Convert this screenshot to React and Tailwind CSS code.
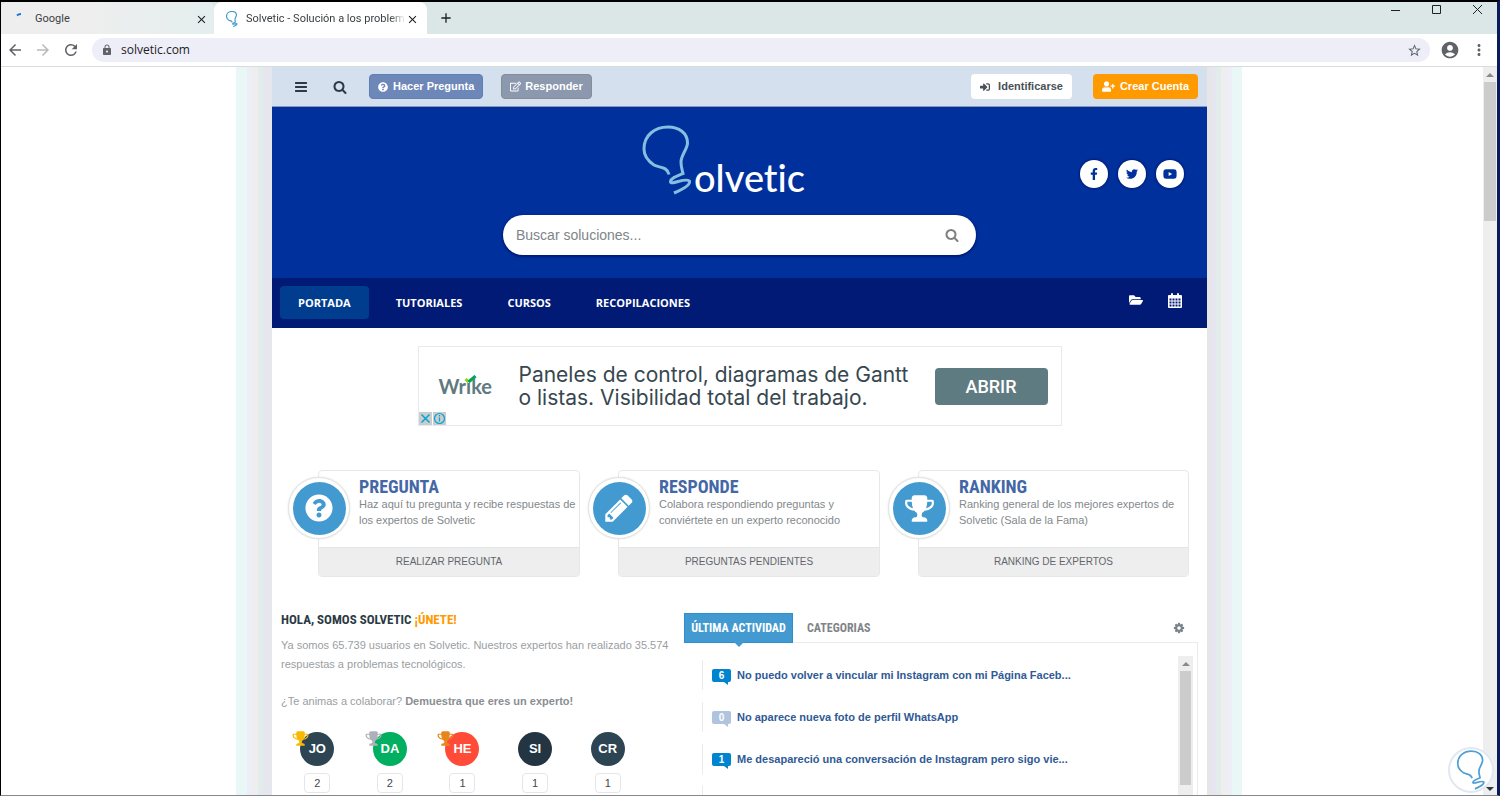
import React, { useState } from "react";
import {
  FaQuestionCircle,
  FaRegEdit,
  FaSignInAlt,
  FaUserPlus,
  FaFacebookF,
  FaTwitter,
  FaYoutube,
  FaFolderOpen,
} from "react-icons/fa";
import {
  MdArrowBack,
  MdArrowForward,
  MdRefresh,
  MdLock,
  MdStarBorder,
  MdAccountCircle,
  MdMoreVert,
  MdClose,
  MdAdd,
} from "react-icons/md";

const paths = {
  bars: "M1664 1344v128q0 26-19 45t-45 19h-1408q-26 0-45-19t-19-45v-128q0-26 19-45t45-19h1408q26 0 45 19t19 45zm0-512v128q0 26-19 45t-45 19h-1408q-26 0-45-19t-19-45v-128q0-26 19-45t45-19h1408q26 0 45 19t19 45zm0-512v128q0 26-19 45t-45 19h-1408q-26 0-45-19t-19-45v-128q0-26 19-45t45-19h1408q26 0 45 19t19 45z",
  search:
    "M1216 832q0-185-131.5-316.5t-316.5-131.5-316.5 131.5-131.5 316.5 131.5 316.5 316.5 131.5 316.5-131.5 131.5-316.5zm512 832q0 52-38 90t-90 38q-54 0-90-38l-343-342q-179 124-399 124-143 0-273.5-55.5t-225-150-150-225-55.5-273.5 55.5-273.5 150-225 225-150 273.5-55.5 273.5 55.5 225 150 150 225 55.5 273.5q0 220-124 399l343 343q37 37 37 90z",
  pencil:
    "M491 1536l91-91-235-235-91 91v107h128v128h107zm523-928q0-22-22-22-10 0-17 7l-542 542q-7 7-7 17 0 22 22 22 10 0 17-7l542-542q7-7 7-17zm-54-192l416 416-832 832h-416v-416zm683 96q0 53-37 90l-166 166-416-416 166-165q36-38 90-38 53 0 91 38l235 234q37 39 37 91z",
  trophy:
    "M522 883q-74-162-74-371h-256v96q0 78 94.5 162t235.5 113zm1078-275v-96h-256q0 209-74 371 141-29 235.5-113t94.5-162zm128-128v128q0 71-41.5 143t-112 130-173 97.5-215.5 44.5q-42 54-95 95-38 34-52.5 72.5t-14.5 89.5q0 54 30.5 91t97.5 37q75 0 133.5 45.5t58.5 114.5v64q0 14-9 23t-23 9h-832q-14 0-23-9t-9-23v-64q0-69 58.5-114.5t133.5-45.5q67 0 97.5-37t30.5-91q0-51-14.5-89.5t-52.5-72.5q-53-41-95-95-113-5-215.5-44.5t-173-97.5-112-130-41.5-143v-128q0-40 28-68t68-28h288v-96q0-66 47-113t113-47h576q66 0 113 47t47 113v96h288q40 0 68 28t28 68z",
  cog: "M1152 896q0-106-75-181t-181-75-181 75-75 181 75 181 181 75 181-75 75-181zm512-109v222q0 12-8 23t-20 13l-185 28q-19 54-39 91 35 50 107 138 10 12 10 25t-9 23q-27 37-99 108t-94 71q-12 0-26-9l-138-108q-44 23-91 38-16 136-29 186-7 28-36 28h-222q-14 0-24.5-8.5t-11.5-21.5l-28-184q-49-16-90-37l-141 107q-10 9-25 9-14 0-25-11-126-114-165-168-7-10-7-23 0-12 8-23 15-21 51-66.5t54-70.5q-27-50-41-99l-183-27q-13-2-21-12.5t-8-23.5v-222q0-12 8-23t19-13l186-28q14-46 39-92-40-57-107-138-10-12-10-24 0-10 9-23 26-36 98.5-107.5t94.5-71.5q13 0 26 10l138 107q44-23 91-38 16-136 29-186 7-28 36-28h222q14 0 24.5 8.5t11.5 21.5l28 184q49 16 90 37l142-107q9-9 24-9 13 0 25 10 129 119 165 170 7 8 7 22 0 12-8 23-15 21-51 66.5t-54 70.5q26 50 41 98l183 28q13 2 21 12.5t8 23.5z",
};

const Icon = ({ name, className }) => (
  <svg viewBox="0 0 1792 1792" fill="currentColor" className={className} aria-hidden="true">
    <path d={paths[name]} />
  </svg>
);

const Bulb = ({ className, width = 3 }) => (
  <svg viewBox="0 0 52 70" fill="none" stroke="currentColor" strokeWidth={width} className={className} aria-hidden="true">
    <path d="M27 49.500C25 41 17 43 12 40C6 36 2 31 2 24C2 10 13 2 26 2C37 2 45.500 8 45.500 18C45.500 24 39 30 39 37C39 42 40 44 41 48.500C35 51 29 53 28.500 56.500C29 61 43 52 47.500 56C49 60 39 65 32 68" />
  </svg>
);

const CalendarIcon = () => (
  <svg viewBox="0 0 14 15" className="w-[14px] h-[15px]" aria-hidden="true">
    <path fill="currentColor" d="M1 2h2V1q0-1 1-1t1 1v1h4V1q0-1 1-1t1 1v1h2q1 0 1 1v11q0 1-1 1H1q-1 0-1-1V3q0-1 1-1z" />
    <path stroke="#001a76" strokeWidth="2" strokeDasharray="2 1" d="M1.500 6.500h11M1.500 9.500h11M1.500 12.500h11" />
  </svg>
);

const stripes = {
  left: ["w-[11px] bg-[#eaf7f7]", "w-[5px] bg-[#eeeef8]", "w-[6px] bg-[#eeeeee]", "w-[5px] bg-[#e2ecea]", "w-[9px] bg-[#e6e6ee]"],
  right: ["w-[4px] bg-[#e6e6e6]", "w-[5px] bg-[#e6e6f0]", "w-[5px] bg-[#e2ecea]", "w-[6px] bg-[#eeeeee]", "w-[5px] bg-[#eeeef8]", "w-[10px] bg-[#eaf7f7]"],
};

const Stripes = ({ items }) => (
  <div className="flex shrink-0" aria-hidden="true">
    {items.map((item, index) => (
      <div key={index} className={item}></div>
    ))}
  </div>
);

const navLinks = ["PORTADA", "TUTORIALES", "CURSOS", "RECOPILACIONES"];

const cards = [
  {
    title: "PREGUNTA",
    lines: ["Haz aquí tu pregunta y recibe respuestas de", "los expertos de Solvetic"],
    action: "REALIZAR PREGUNTA",
    icon: <FaQuestionCircle className="size-[28px]" />,
  },
  {
    title: "RESPONDE",
    lines: ["Colabora respondiendo preguntas y", "conviértete en un experto reconocido"],
    action: "PREGUNTAS PENDIENTES",
    icon: <Icon name="pencil" className="size-[32px]" />,
  },
  {
    title: "RANKING",
    lines: ["Ranking general de los mejores expertos de", "Solvetic (Sala de la Fama)"],
    action: "RANKING DE EXPERTOS",
    icon: <Icon name="trophy" className="size-[31px]" />,
  },
];

const experts = [
  { name: "JO", count: 2, color: "bg-[#2d4553]", trophy: "text-[#f9b801]" },
  { name: "DA", count: 2, color: "bg-[#00b060]", trophy: "text-[#b0b0b8]" },
  { name: "HE", count: 1, color: "bg-[#ff4b38]", trophy: "text-[#e8861c]" },
  { name: "SI", count: 1, color: "bg-[#233443]" },
  { name: "CR", count: 1, color: "bg-[#2d4553]" },
];

const activity = [
  { count: 6, title: "No puedo volver a vincular mi Instagram con mi Página Faceb..." },
  { count: 0, title: "No aparece nueva foto de perfil WhatsApp" },
  { count: 1, title: "Me desapareció una conversación de Instagram pero sigo vie..." },
  { count: null, title: "" },
];

const BrowserBar = () => {
  const [url, setUrl] = useState("solvetic.com");

  return (
    <div className="shrink-0 text-[#3c4043]">
      {/* tabs */}
      <div className="flex h-[32px] bg-[#dae7e6] font-[Roboto,sans-serif] text-[11px]">
        <div className="flex items-center w-[213px] pl-[14px] pr-[6px] pt-[2px] bg-linear-to-r from-[#eeeeee] from-40% to-[#e4eeee] rounded-t-md">
          <svg viewBox="0 0 12 12" className="size-[12px]" aria-hidden="true">
            <path d="M2 2.500Q3.500 1 6 1" stroke="#1976d2" strokeWidth="2" fill="none" />
          </svg>
          <span className="ml-[8px] flex-1">Google</span>
          <button aria-label="Cerrar pestaña Google"><MdClose className="size-[13px] text-[#202124]" /></button>
        </div>
        <div className="flex items-center w-[213px] pl-[12px] pr-[8px] pt-[2px] bg-white rounded-t-lg">
          <Bulb className="w-[12px] h-[16px] text-[#439ad0]" width={5} />
          <span className="ml-[8px] flex-1 whitespace-nowrap mask-r-from-90%">Solvetic - Solución a los problem</span>
          <button aria-label="Cerrar pestaña Solvetic"><MdClose className="size-[13px] text-[#202124]" /></button>
        </div>
        <button className="px-[11px]" aria-label="Nueva pestaña"><MdAdd className="size-[16px] text-[#202124]" /></button>
        <div className="flex items-start ml-auto gap-[30px] pt-[2px] pr-[14px] text-[#202124]">
          <button aria-label="Minimizar">
            <svg viewBox="0 0 11 11" className="size-[11px]" fill="none" stroke="currentColor"><path d="M1 6.500h9" /></svg>
          </button>
          <button aria-label="Maximizar">
            <svg viewBox="0 0 11 11" className="size-[11px]" fill="none" stroke="currentColor"><path d="M1.500 1.500h8v8h-8z" /></svg>
          </button>
          <button aria-label="Cerrar">
            <svg viewBox="0 0 11 11" className="size-[11px]" fill="none" stroke="currentColor"><path d="M1 1l9 9M10 1l-9 9" /></svg>
          </button>
        </div>
      </div>

      {/* address */}
      <div className="flex items-center h-[33px] bg-white border-b border-[#d5dedd] pl-[5px] pr-[9px] text-[#5f6368]">
        <button aria-label="Atrás" className="mr-[10px]"><MdArrowBack className="size-[18px]" /></button>
        <button aria-label="Adelante" className="mr-[10px] text-[#b8babd]"><MdArrowForward className="size-[18px]" /></button>
        <button aria-label="Recargar" className="mr-[12px]"><MdRefresh className="size-[18px]" /></button>
        <div className="flex items-center flex-1 h-[24px] rounded-full bg-[#eeeef8] pl-[9px] pr-[8px]">
          <MdLock className="size-[12px]" />
          <input
            type="text"
            aria-label="Dirección"
            className="flex-1 ml-[8px] bg-transparent font-['Open_Sans',sans-serif] text-[12px] text-[#202124] focus:outline-none"
            value={url}
            onChange={(e) => setUrl(e.target.value)}
          />
          <button aria-label="Añadir a marcadores"><MdStarBorder className="size-[15px]" /></button>
        </div>
        <button aria-label="Perfil" className="ml-[10px]"><MdAccountCircle className="size-[20px]" /></button>
        <button aria-label="Menú" className="ml-[10px]"><MdMoreVert className="size-[18px]" /></button>
      </div>
    </div>
  );
};

const TopBar = () => (
  <div className="flex items-center h-[40px] bg-[#d5e0ef] border-b border-[#8b98b5] pl-[22px] pr-[9px] text-[11px] font-bold">
    <button aria-label="Menú principal" className="text-[#2b3a44]"><Icon name="bars" className="size-[14px]" /></button>
    <button aria-label="Buscar" className="ml-[25px] text-[#2b3a44]"><Icon name="search" className="size-[14px]" /></button>
    <button className="flex items-center h-[25px] ml-[22px] px-[8px] rounded-sm border border-[#5f7fb8] bg-[#6d87b9] text-white">
      <FaQuestionCircle className="size-[10px] mr-[5px]" />Hacer Pregunta
    </button>
    <button className="flex items-center h-[25px] ml-[18px] px-[8px] rounded-sm border border-[#868d94] bg-[#8b98ae] text-white">
      <FaRegEdit className="size-[11px] mr-[4px]" />Responder
    </button>
    <button className="flex items-center h-[25px] ml-auto px-[9px] rounded-sm bg-white text-[#485058]">
      <FaSignInAlt className="size-[10px] mr-[8px]" />Identificarse
    </button>
    <button className="flex items-center h-[25px] ml-[21px] px-[9px] rounded-sm bg-[#ff9a00] text-white">
      <FaUserPlus className="size-[13px] mr-[5px]" />Crear Cuenta
    </button>
  </div>
);

const Hero = () => {
  const [searchText, setSearchText] = useState("");

  return (
    <div className="grid grid-cols-[1fr_473px_1fr] h-[171px] bg-[#00309c]">
      <div></div>
      <div>
        <a href="#" aria-label="Solvetic" className="flex items-end w-fit ml-[139px] pt-[18px] text-white">
          <Bulb className="w-[52px] h-[70px] text-[#84bfe0]" width={3} />
          <span className="font-[Lato,sans-serif] text-[38px] leading-[36px] font-medium [font-variant-ligatures:none]">olvetic</span>
        </a>
        <form className="flex items-center h-[40px] mt-[20px] pl-[13px] pr-[17px] rounded-full bg-white shadow-[0_1px_2px_1px_#001a76]" onSubmit={(e) => e.preventDefault()}>
          <input
            type="text"
            aria-label="Buscar soluciones"
            placeholder="Buscar soluciones..."
            className="flex-1 text-[14px] placeholder:text-[#808488] focus:outline-none"
            value={searchText}
            onChange={(e) => setSearchText(e.target.value)}
          />
          <button aria-label="Buscar soluciones" className="text-[#808080]"><Icon name="search" className="size-[14px]" /></button>
        </form>
      </div>
      <div className="flex justify-end gap-[10px] pt-[53px] pr-[23px] text-[#00309c]">
        <a href="#" aria-label="Facebook" className="flex items-center justify-center size-[28px] rounded-full bg-white shadow-[0_0_2px_1px_#001a76]"><FaFacebookF className="size-[12px]" /></a>
        <a href="#" aria-label="Twitter" className="flex items-center justify-center size-[28px] rounded-full bg-white shadow-[0_0_2px_1px_#001a76]"><FaTwitter className="size-[12px]" /></a>
        <a href="#" aria-label="YouTube" className="flex items-center justify-center size-[28px] rounded-full bg-white shadow-[0_0_2px_1px_#001a76]"><FaYoutube className="size-[14px]" /></a>
      </div>
    </div>
  );
};

const NavBar = () => (
  <nav className="flex items-center gap-[9px] h-[50px] bg-[#001a76] pl-[8px] pr-[25px] pb-[2px] text-white font-['Open_Sans',sans-serif] text-[11px] font-bold">
    {navLinks.map((link, index) => (
      <a key={link} href="#" className={index === 0 ? "px-[18px] h-[33px] leading-[33px] rounded-sm bg-[#003d8f]" : "px-[18px] h-[33px] leading-[33px]"}>
        {link}
      </a>
    ))}
    <a href="#" aria-label="Archivos" className="ml-auto mb-[4px]"><FaFolderOpen className="size-[14px]" /></a>
    <a href="#" aria-label="Calendario" className="ml-[16px] mb-[4px]"><CalendarIcon /></a>
  </nav>
);

const Banner = () => (
  <div className="relative flex items-center w-[644px] h-[80px] mt-[18px] mx-auto border border-[#e4eaee] pl-[20px] pr-[13px]">
    <div className="relative w-[56px] font-[Lato,sans-serif] text-[20px] font-bold text-[#5f7a80]">
      Wrike
      <svg viewBox="0 0 12 9" className="absolute left-[25px] top-[4px] w-[13px] h-[9px]" fill="none" aria-hidden="true">
        <path d="M0 3h7v5h-7z" fill="#fff" />
        <path d="M1 4l3 3" stroke="#8fd116" strokeWidth="3" />
        <path d="M4 7l7-6" stroke="#00a651" strokeWidth="3" />
      </svg>
    </div>
    <p className="ml-[24px] font-[Inter,sans-serif] text-[21px] leading-[23px] text-[#37474f] whitespace-nowrap">
      Paneles de control, diagramas de Gantt<br />o listas. Visibilidad total del trabajo.
    </p>
    <button className="w-[113px] h-[37px] ml-auto rounded-sm bg-[#5f7b82] text-white font-[Roboto,sans-serif] text-[18px] font-medium">ABRIR</button>
    <div className="absolute left-0 bottom-0 flex gap-px text-[#00a5d8]">
      <button aria-label="Cerrar anuncio" className="size-[13px] bg-[#cccccc]">
        <svg viewBox="0 0 13 13" fill="none" stroke="currentColor" strokeWidth="1.500"><path d="M2.500 2.500l8 8M10.500 2.500l-8 8" /></svg>
      </button>
      <button aria-label="Información del anuncio" className="size-[13px] bg-[#cccccc]">
        <svg viewBox="0 0 13 13" fill="none" stroke="currentColor" strokeWidth="1.200"><circle cx="6.500" cy="6.500" r="5" /><path d="M6.500 5.500v4M6.500 3v1.500" /></svg>
      </button>
    </div>
  </div>
);

const Cards = () => (
  <div className="grid grid-cols-[262fr_262fr_271fr] gap-[38px] mt-[44px] pl-[46px] pr-[18px]">
    {cards.map((card) => (
      <div key={card.title} className="relative flex flex-col h-[107px] border border-[#e6e8e8] rounded-sm">
        <div className="absolute -left-[31px] top-[6px] flex items-center justify-center size-[62px] rounded-full bg-white border border-[#e2e4e4] shadow-[0_0_2px_#dddddd]">
          <div className="flex items-center justify-center size-[53px] rounded-full bg-[#439ad0] text-white">{card.icon}</div>
        </div>
        <div className="flex-1 pl-[40px] pt-[6px]">
          <h2 className="font-['Roboto_Condensed','Liberation_Sans_Narrow',Roboto,sans-serif] text-[18px] leading-[19px] font-bold text-[#4467a6]">{card.title}</h2>
          <p className="text-[11px] leading-[16px] text-[#84888c] whitespace-nowrap">
            {card.lines[0]}<br />{card.lines[1]}
          </p>
        </div>
        <a href="#" className="h-[29px] leading-[28px] text-center text-[10px] bg-[#eeeeee] border-t border-[#e2e6e6] text-[#62666c]">{card.action}</a>
      </div>
    ))}
  </div>
);

const Community = () => (
  <section className="w-[403px]">
    <h2 className="font-['Roboto_Condensed','Liberation_Sans_Narrow',Roboto,sans-serif] text-[13px] leading-[14px] font-bold text-[#2b3a44]">
      HOLA, SOMOS SOLVETIC <a href="#" className="text-[#ff9a00]">¡ÚNETE!</a>
    </h2>
    <p className="mt-[9px] text-[11px] leading-[19px] text-[#9a9ea2]">
      Ya somos 65.739 usuarios en Solvetic. Nuestros expertos han realizado 35.574 respuestas a problemas tecnológicos.
    </p>
    <p className="mt-[18px] text-[11px] leading-[19px] text-[#9a9ea2]">
      ¿Te animas a colaborar? <b className="text-[#8a8e92]">Demuestra que eres un experto!</b>
    </p>
    <div className="grid grid-cols-5 w-[363px] mt-[21px]">
      {experts.map((expert) => (
        <div key={expert.name} className="flex flex-col items-center">
          <a href="#" className={`relative flex items-center justify-center size-[34px] rounded-full text-white text-[13px] font-bold ${expert.color}`}>
            {expert.trophy && <Icon name="trophy" className={`absolute -left-[8px] -top-[2px] size-[17px] ${expert.trophy}`} />}
            {expert.name}
          </a>
          <span className="w-[26px] h-[20px] mt-[7px] border border-[#e6e6e6] rounded-sm text-center text-[11px] leading-[18px] text-[#44484c]">{expert.count}</span>
        </div>
      ))}
    </div>
  </section>
);

const Activity = () => {
  const [tab, setTab] = useState("actividad");

  return (
    <section className="flex-1">
      <div className="flex items-center h-[30px] font-['Roboto_Condensed','Liberation_Sans_Narrow',Roboto,sans-serif] text-[12px] font-bold border-b border-[#ebebeb]">
        <button className="relative h-[30px] w-[109px] bg-[#439ad0] border border-[#2a90d0] text-white" onClick={() => setTab("actividad")}>
          ÚLTIMA ACTIVIDAD
          <span className="absolute left-[49px] top-[28px] border-x-[5px] border-t-[5px] border-x-transparent border-t-[#439ad0]"></span>
        </button>
        <button className="ml-[14px] text-[#808488]" onClick={() => setTab("categorias")}>CATEGORIAS</button>
        <button aria-label="Ajustes" className="ml-auto mr-[13px] text-[#7a8288]"><Icon name="cog" className="size-[12px]" /></button>
      </div>
      <div className="flex h-[160px] border-r border-[#ebebeb] pl-[18px] pr-[4px] pt-[13px]">
        {tab === "actividad" && (
          <ul className="flex-1 pt-[4px]">
            {activity.map((item, index) => (
              <li key={index} className="flex items-center h-[30px] mb-[12px] border-l border-[#ebebeb] pl-[9px]">
                <span className={`relative w-[19px] h-[13px] rounded-xs text-center text-[10px] leading-[13px] font-bold text-white ${item.count === 0 ? "bg-[#b0c4de]" : "bg-[#0084d0]"}`}>
                  {item.count}
                  <span className={`absolute right-[3px] top-[13px] border-r-[4px] border-b-[3px] border-b-transparent ${item.count === 0 ? "border-r-[#b0c4de]" : "border-r-[#0084d0]"}`}></span>
                </span>
                <a href="#" className="ml-[6px] text-[11px] font-bold text-[#2f5a96]">{item.title}</a>
              </li>
            ))}
          </ul>
        )}
        <div className="w-[15px] ml-auto bg-[#eeeeee]" aria-hidden="true">
          <div className="flex items-center justify-center h-[15px]">
            <div className="border-x-[4px] border-b-[4px] border-x-transparent border-b-[#8a8a8a]"></div>
          </div>
          <div className="h-[114px] mx-[2px] bg-[#cccccc]"></div>
        </div>
      </div>
    </section>
  );
};

const App = () => {
  return (
    <div className="relative flex flex-col h-screen overflow-hidden bg-white border-t-2 border-l border-r-3 border-b border-t-black border-l-black border-r-[#0a1a5c] border-b-[#85898e] font-['Liberation_Sans',Arial,sans-serif]">
      <BrowserBar />
      <div className="flex flex-1 min-h-0">
        <main className="flex flex-1 justify-center pr-[6px] overflow-hidden">
          <Stripes items={stripes.left} />
          <div className="w-[935px] shrink-0">
            <TopBar />
            <Hero />
            <NavBar />
            <Banner />
            <Cards />
            <div className="flex mt-[36px] px-[9px]">
              <Community />
              <Activity />
            </div>
          </div>
          <Stripes items={stripes.right} />
        </main>

        {/* page scrollbar */}
        <div className="flex flex-col w-[14px] bg-[#eeeeee]" aria-hidden="true">
          <div className="flex items-center justify-center h-[15px]">
            <div className="border-x-[4px] border-b-[4px] border-x-transparent border-b-[#8a8a8a]"></div>
          </div>
          <div className="h-[139px] mx-px bg-[#cccccc]"></div>
          <div className="flex justify-center mt-auto pb-[4px]">
            <div className="border-x-[4px] border-t-[4px] border-x-transparent border-t-[#2b3a44]"></div>
          </div>
        </div>
      </div>

      <button aria-label="Solvetic" className="absolute right-[3px] bottom-[2px] flex items-center justify-center size-[46px] rounded-full bg-white border-2 border-[#e2e8f2] text-[#4f9fd4]">
        <Bulb className="w-[31px] h-[40px]" width={3} />
      </button>
    </div>
  );
};
export default App;
